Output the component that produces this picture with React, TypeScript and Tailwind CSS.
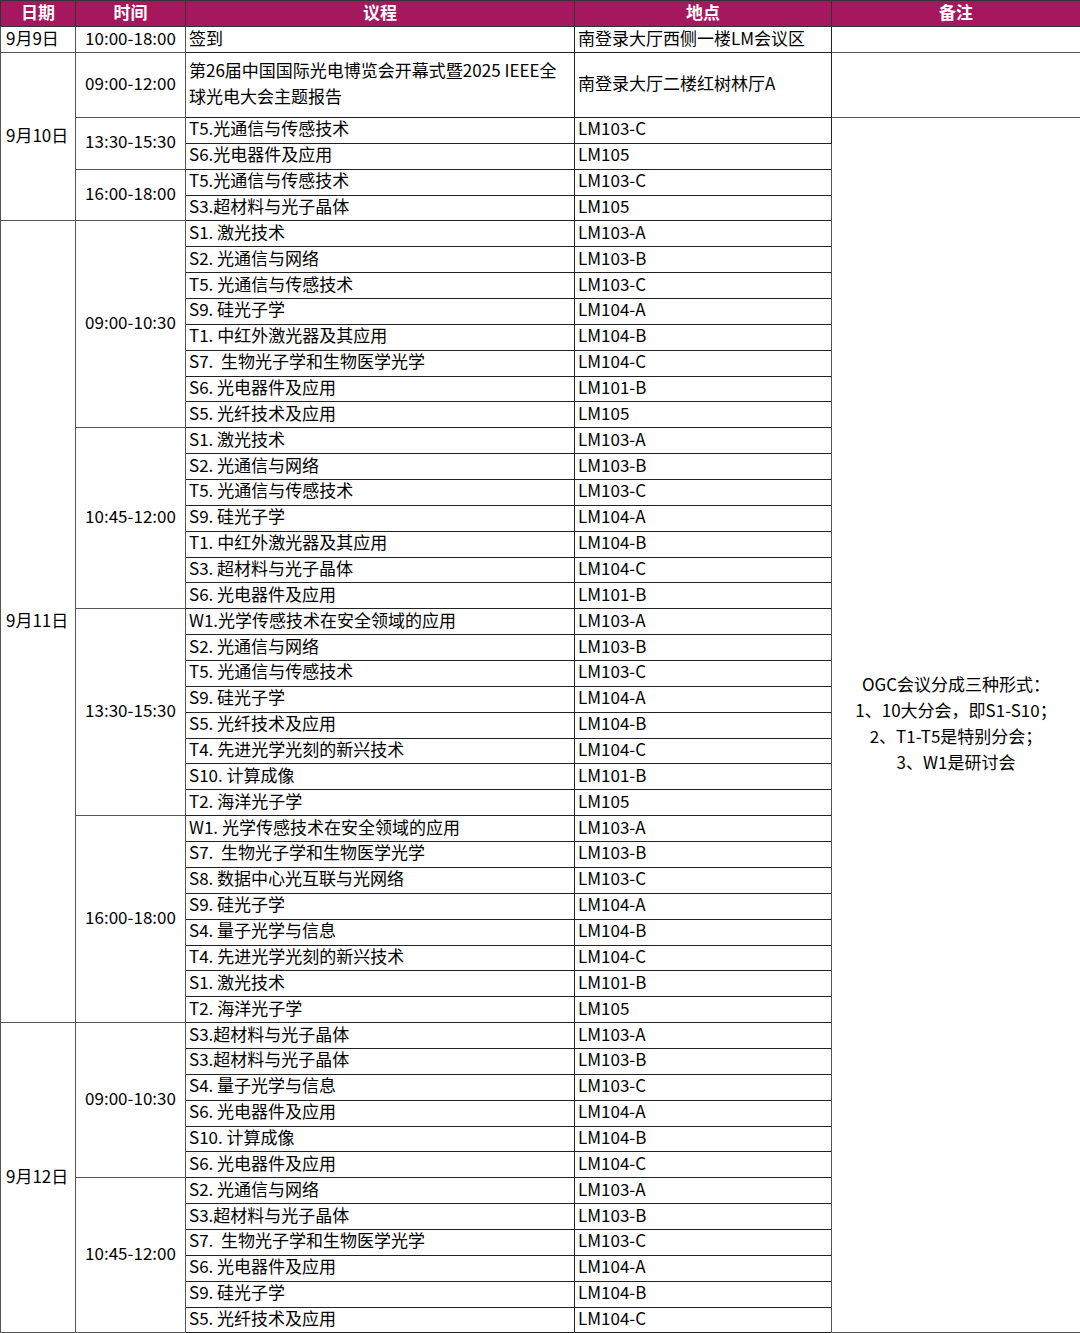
import React from "react";

type Sess = { time: string; items: [string, string][] };
type Day = { date: string; sessions: Sess[] };

const days: Day[] = [
  {
    date: "9月10日",
    sessions: [
      { time: "13:30-15:30", items: [["T5.光通信与传感技术", "LM103-C"], ["S6.光电器件及应用", "LM105"]] },
      { time: "16:00-18:00", items: [["T5.光通信与传感技术", "LM103-C"], ["S3.超材料与光子晶体", "LM105"]] },
    ],
  },
  {
    date: "9月11日",
    sessions: [
      {
        time: "09:00-10:30",
        items: [
          ["S1. 激光技术", "LM103-A"],
          ["S2. 光通信与网络", "LM103-B"],
          ["T5. 光通信与传感技术", "LM103-C"],
          ["S9. 硅光子学", "LM104-A"],
          ["T1. 中红外激光器及其应用", "LM104-B"],
          ["S7.  生物光子学和生物医学光学", "LM104-C"],
          ["S6. 光电器件及应用", "LM101-B"],
          ["S5. 光纤技术及应用", "LM105"],
        ],
      },
      {
        time: "10:45-12:00",
        items: [
          ["S1. 激光技术", "LM103-A"],
          ["S2. 光通信与网络", "LM103-B"],
          ["T5. 光通信与传感技术", "LM103-C"],
          ["S9. 硅光子学", "LM104-A"],
          ["T1. 中红外激光器及其应用", "LM104-B"],
          ["S3. 超材料与光子晶体", "LM104-C"],
          ["S6. 光电器件及应用", "LM101-B"],
        ],
      },
      {
        time: "13:30-15:30",
        items: [
          ["W1.光学传感技术在安全领域的应用", "LM103-A"],
          ["S2. 光通信与网络", "LM103-B"],
          ["T5. 光通信与传感技术", "LM103-C"],
          ["S9. 硅光子学", "LM104-A"],
          ["S5. 光纤技术及应用", "LM104-B"],
          ["T4. 先进光学光刻的新兴技术", "LM104-C"],
          ["S10. 计算成像", "LM101-B"],
          ["T2. 海洋光子学", "LM105"],
        ],
      },
      {
        time: "16:00-18:00",
        items: [
          ["W1. 光学传感技术在安全领域的应用", "LM103-A"],
          ["S7.  生物光子学和生物医学光学", "LM103-B"],
          ["S8. 数据中心光互联与光网络", "LM103-C"],
          ["S9. 硅光子学", "LM104-A"],
          ["S4. 量子光学与信息", "LM104-B"],
          ["T4. 先进光学光刻的新兴技术", "LM104-C"],
          ["S1. 激光技术", "LM101-B"],
          ["T2. 海洋光子学", "LM105"],
        ],
      },
    ],
  },
  {
    date: "9月12日",
    sessions: [
      {
        time: "09:00-10:30",
        items: [
          ["S3.超材料与光子晶体", "LM103-A"],
          ["S3.超材料与光子晶体", "LM103-B"],
          ["S4. 量子光学与信息", "LM103-C"],
          ["S6. 光电器件及应用", "LM104-A"],
          ["S10. 计算成像", "LM104-B"],
          ["S6. 光电器件及应用", "LM104-C"],
        ],
      },
      {
        time: "10:45-12:00",
        items: [
          ["S2. 光通信与网络", "LM103-A"],
          ["S3.超材料与光子晶体", "LM103-B"],
          ["S7.  生物光子学和生物医学光学", "LM103-C"],
          ["S6. 光电器件及应用", "LM104-A"],
          ["S9. 硅光子学", "LM104-B"],
          ["S5. 光纤技术及应用", "LM104-C"],
        ],
      },
    ],
  },
];

const td = "border border-[#555] p-0 pb-[4px] align-middle whitespace-pre";
const tdd = "border border-[#222] p-0 pb-[4px] align-middle whitespace-pre pl-[3px]";
const th = "border border-[#333] text-center p-0 pb-[3px]";

export default function App() {
  const rows: React.ReactNode[] = [];
  let first = true;
  const noteRows = 47;
  days.forEach((d, di) => {
    const dayCount = d.sessions.reduce((a, s) => a + s.items.length, 0);
    d.sessions.forEach((s, si) => {
      s.items.forEach((it, ii) => {
        rows.push(
          <tr key={`${d.date}-${si}-${ii}`} className="h-[25.87px]">
            {di > 0 && si === 0 && ii === 0 && (
              <td rowSpan={dayCount} className={`${td} pl-[5px] text-left`}>
                {d.date}
              </td>
            )}
            {ii === 0 && (
              <td rowSpan={s.items.length} className={`${td} text-center`}>
                {s.time}
              </td>
            )}
            <td className={tdd}>{it[0]}</td>
            <td className={tdd}>{it[1]}</td>
            {first && (
              <td rowSpan={noteRows} className={`${td} text-center leading-[26px]`}>
                <div>
                  OGC会议分成三种形式：
                  <br />
                  1、10大分会，即S1-S10；
                  <br />
                  2、T1-T5是特别分会；
                  <br />
                  3、W1是研讨会
                </div>
              </td>
            )}
          </tr>
        );
        first = false;
      });
    });
  });

  return (
    <div
      className="w-[1080px] h-[1333px] bg-white text-black overflow-hidden"
      style={{ fontFamily: '"Noto Sans CJK SC", "Noto Sans", sans-serif' }}
    >
      <table className="w-[1080px] table-fixed border-collapse text-[17px] leading-[20px]">
        <colgroup>
          <col className="w-[75px]" />
          <col className="w-[110px]" />
          <col className="w-[389px]" />
          <col className="w-[257px]" />
          <col className="w-[249px]" />
        </colgroup>
        <tbody>
          <tr className="h-[26px] bg-[#a5185e] text-white font-bold">
            <td className={th}>日期</td>
            <td className={th}>时间</td>
            <td className={th}>议程</td>
            <td className={th}>地点</td>
            <td className={th}>备注</td>
          </tr>
          <tr className="h-[26px]">
            <td className={`${td} pl-[5px]`}>9月9日</td>
            <td className={`${td} text-center`}>10:00-18:00</td>
            <td className={tdd}>签到</td>
            <td className={tdd}>南登录大厅西侧一楼LM会议区</td>
            <td className={td}></td>
          </tr>
          <tr className="h-[65px]">
            <td rowSpan={5} className={`${td} pl-[5px]`}>
              9月10日
            </td>
            <td className={`${td} text-center`}>09:00-12:00</td>
            <td className={`${tdd} leading-[26px]`}>
              第26届中国国际光电博览会开幕式暨2025 IEEE全
              <br />
              球光电大会主题报告
            </td>
            <td className={tdd}>南登录大厅二楼红树林厅A</td>
            <td className={td}></td>
          </tr>
          {rows}
        </tbody>
      </table>
    </div>
  );
}
